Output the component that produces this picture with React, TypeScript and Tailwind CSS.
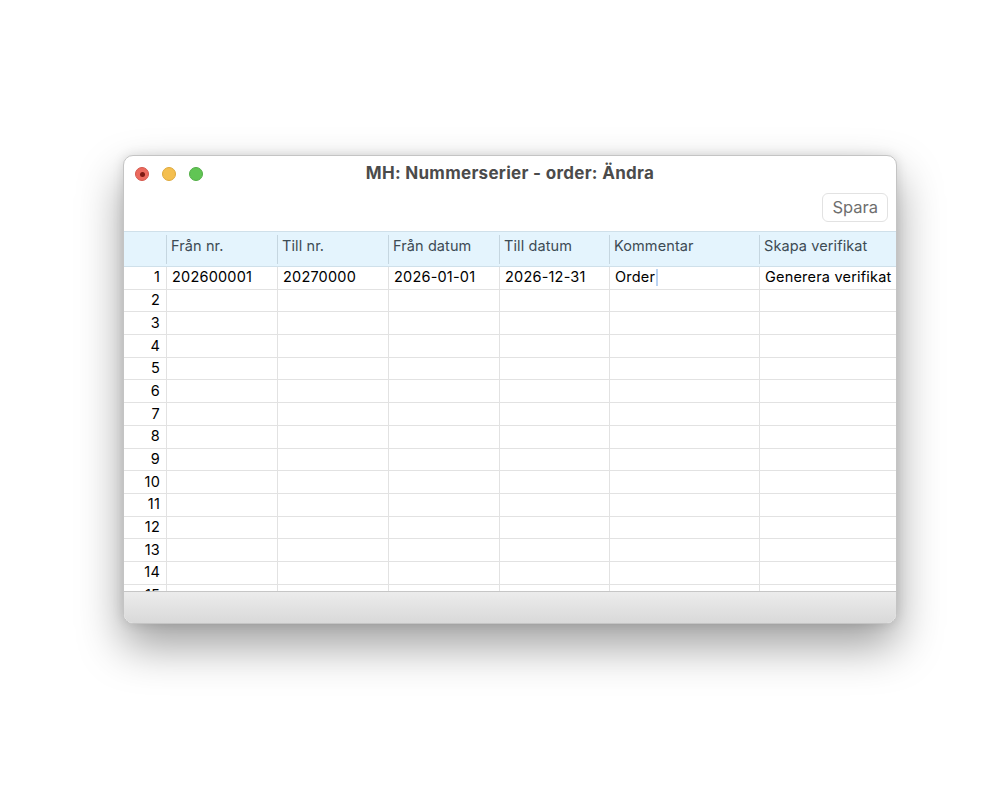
import React from "react";

const cols = [
  { label: "Från nr.", w: "w-[111px]" },
  { label: "Till nr.", w: "w-[111px]" },
  { label: "Från datum", w: "w-[111px]" },
  { label: "Till datum", w: "w-[110px]" },
  { label: "Kommentar", w: "w-[150px]" },
  { label: "Skapa verifikat", w: "flex-1" },
];

const firstRow = ["202600001", "20270000", "2026-01-01", "2026-12-31", "Order", "Generera verifikat"];

export default function App() {
  const rows = Array.from({ length: 15 }, (_, i) => i + 1);
  return (
    <div
      className="w-[1000px] h-[800px] bg-white flex"
      style={{ fontFamily: "Inter, 'Liberation Sans', sans-serif" }}
    >
      <div className="ml-[123px] mt-[155px] w-[774px] h-[469px] rounded-[10px] border border-[#c4c4c4] bg-white overflow-hidden flex flex-col shadow-[0_22px_45px_rgba(0,0,0,0.38),0_0_12px_rgba(0,0,0,0.12)]">
        {/* title bar */}
        <div className="h-[35px] flex items-center relative shrink-0">
          <div className="flex items-center gap-[13px] pl-[11px] pt-[1px]">
            <div className="w-[14px] h-[14px] rounded-full bg-[#ec6a5e] border border-[#d4574c] flex items-center justify-center">
              <div className="w-[5px] h-[5px] rounded-full bg-[#7e1a12]" />
            </div>
            <div className="w-[14px] h-[14px] rounded-full bg-[#f4bf4f] border border-[#dea93c]" />
            <div className="w-[14px] h-[14px] rounded-full bg-[#61c554] border border-[#52ae46]" />
          </div>
          <div className="absolute inset-0 flex items-center justify-center pt-[1px] text-[17px] font-bold text-[#4b4b4b] tracking-[0.3px]">
            MH: Nummerserier - order: Ändra
          </div>
        </div>
        {/* toolbar */}
        <div className="h-[40px] flex items-start justify-end pr-[8px] pt-[2px] shrink-0">
          <button className="h-[29px] px-[9px] rounded-[6px] border border-[#e2e2e2] bg-white text-[16.5px] text-[#6e6e6e]">
            Spara
          </button>
        </div>
        {/* header */}
        <div className="h-[36px] shrink-0 flex bg-[#e4f4fd] border-t border-b border-[#cfe0ea] text-[14.5px] text-[#3d4b54]">
          <div className="w-[42px] shrink-0" />
          {cols.map((c) => (
            <div key={c.label} className={`${c.w} shrink-0 flex items-center`}>
              <div className="w-px h-[29px] bg-[#c5d6e0]" />
              <span className="pl-[4px] pb-[6px] tracking-[0.1px]">{c.label}</span>
            </div>
          ))}
        </div>
        {/* body */}
        <div className="flex-1 overflow-hidden text-[14.5px] text-black tracking-[0.2px]">
          {rows.map((r) => (
            <div key={r} className="h-[22.7px] flex border-b border-[#e2e2e2]">
              <div className="w-[42px] shrink-0 flex items-center justify-end pr-[6px] pb-[1px]">{r}</div>
              {cols.map((c, i) => (
                <div key={c.label} className={`${c.w} shrink-0 flex items-center border-l border-[#e2e2e2] pl-[5px] pb-[1px]`}>
                  {r === 1 && (
                    <>
                      <span className="whitespace-nowrap">{firstRow[i]}</span>
                      {i === 4 && <span className="w-[2px] h-[17px] bg-[#b9d3f3] ml-[1px]" />}
                    </>
                  )}
                </div>
              ))}
            </div>
          ))}
        </div>
        {/* footer */}
        <div className="h-[32px] shrink-0 border-t border-[#c6c6c6] bg-gradient-to-b from-[#ececec] to-[#d9d9d9]" />
      </div>
    </div>
  );
}
